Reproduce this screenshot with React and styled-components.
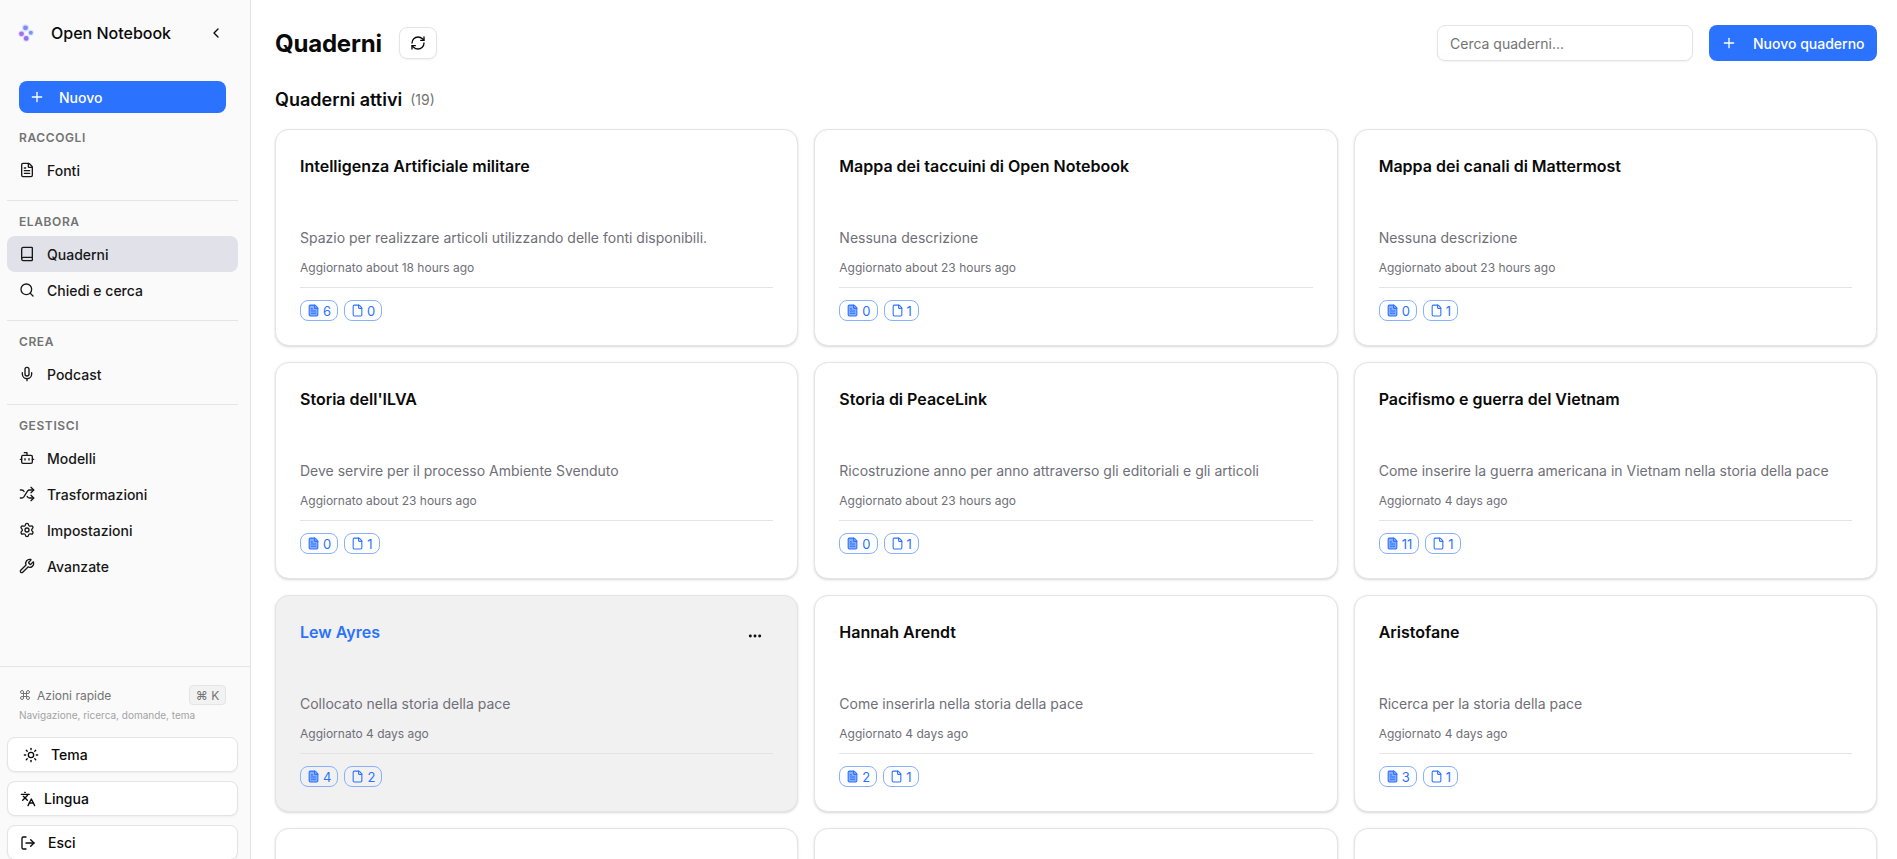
import React from 'react'
import styled, { createGlobalStyle } from 'styled-components'
import {
  Bot, Book, ChevronLeft, Command, File, FileText, Languages, LogOut, MoreHorizontal,
  Mic, Plus, RefreshCw, Search, Settings, Shuffle, Sun, Wrench,
} from 'lucide-react'

const GlobalStyle = createGlobalStyle`
  * { box-sizing: border-box; }
  html, body { margin: 0; height: 100%; overflow: hidden; background: #fff; }
  body { font-family: Inter, "Liberation Sans", sans-serif; color: #0a0a0a; }
`

const sections = [
  { label: 'RACCOGLI', items: [{ name: 'Fonti', Icon: FileText }] },
  {
    label: 'ELABORA',
    items: [
      { name: 'Quaderni', Icon: Book, active: true },
      { name: 'Chiedi e cerca', Icon: Search },
    ],
  },
  { label: 'CREA', items: [{ name: 'Podcast', Icon: Mic }] },
  {
    label: 'GESTISCI',
    items: [
      { name: 'Modelli', Icon: Bot },
      { name: 'Trasformazioni', Icon: Shuffle },
      { name: 'Impostazioni', Icon: Settings },
      { name: 'Avanzate', Icon: Wrench },
    ],
  },
]

const notebooks = [
  { title: 'Intelligenza Artificiale militare', desc: 'Spazio per realizzare articoli utilizzando delle fonti disponibili.', updated: 'about 18 hours ago', sources: 6, notes: 0 },
  { title: 'Mappa dei taccuini di Open Notebook', desc: 'Nessuna descrizione', updated: 'about 23 hours ago', sources: 0, notes: 1 },
  { title: 'Mappa dei canali di Mattermost', desc: 'Nessuna descrizione', updated: 'about 23 hours ago', sources: 0, notes: 1 },
  { title: "Storia dell'ILVA", desc: 'Deve servire per il processo Ambiente Svenduto', updated: 'about 23 hours ago', sources: 0, notes: 1 },
  { title: 'Storia di PeaceLink', desc: 'Ricostruzione anno per anno attraverso gli editoriali e gli articoli', updated: 'about 23 hours ago', sources: 0, notes: 1 },
  { title: 'Pacifismo e guerra del Vietnam', desc: 'Come inserire la guerra americana in Vietnam nella storia della pace', updated: '4 days ago', sources: 11, notes: 1 },
  { title: 'Lew Ayres', desc: 'Collocato nella storia della pace', updated: '4 days ago', sources: 4, notes: 2, hovered: true },
  { title: 'Hannah Arendt', desc: 'Come inserirla nella storia della pace', updated: '4 days ago', sources: 2, notes: 1 },
  { title: 'Aristofane', desc: 'Ricerca per la storia della pace', updated: '4 days ago', sources: 3, notes: 1 },
]

function Logo() {
  return (
    <svg width="18" height="18" viewBox="0 0 18 18">
      <circle cx="7.5" cy="3.8" r="3.6" fill="#d5e2fd" />
      <circle cx="3.5" cy="9.8" r="3.4" fill="#e6dcfd" />
      <circle cx="12.8" cy="8.8" r="3" fill="#d9e4fd" />
      <circle cx="8.2" cy="14.4" r="3.4" fill="#e2dcfd" />
      <circle cx="7.5" cy="3.8" r="2.4" fill="#7f8af6" />
      <circle cx="3.5" cy="9.8" r="2.4" fill="#a26ef2" />
      <circle cx="12.8" cy="8.8" r="2" fill="#7f93f6" />
      <circle cx="8.2" cy="14.4" r="2.4" fill="#8d72f3" />
    </svg>
  )
}

function NotebookCard({ notebook }) {
  const { title, desc, updated, sources, notes, hovered } = notebook
  return (
    <Card $hovered={hovered}>
      <CardTop>
        <CardTitle $hovered={hovered}>{title}</CardTitle>
        {hovered && <MoreButton><MoreHorizontal size={16} strokeWidth={2.4} /></MoreButton>}
      </CardTop>
      <CardDesc>{desc}</CardDesc>
      <CardDate>Aggiornato {updated}</CardDate>
      <CardStats>
        <StatBadge>
          <FileText size={13} fill="#86adff" />
          {sources}
        </StatBadge>
        <StatBadge>
          <File size={13} />
          {notes}
        </StatBadge>
      </CardStats>
    </Card>
  )
}

export default function App() {
  return (
    <Page>
      <GlobalStyle />
      <Sidebar>
        <Brand>
          <BrandName>
            <Logo />
            <span>Open Notebook</span>
          </BrandName>
          <ChevronLeft size={16} />
        </Brand>
        <NewWrap>
          <NewButton>
            <Plus size={16} />
            Nuovo
          </NewButton>
        </NewWrap>
        <Nav>
          {sections.map((section) => (
            <Section key={section.label}>
              <SectionLabel>{section.label}</SectionLabel>
              {section.items.map(({ name, Icon, active }) => (
                <NavItem key={name} $active={active}>
                  <Icon size={16} />
                  {name}
                </NavItem>
              ))}
            </Section>
          ))}
        </Nav>
        <SideFooter>
          <QuickRow>
            <QuickLabel><Command size={12} />Azioni rapide</QuickLabel>
            <Kbd>⌘ K</Kbd>
          </QuickRow>
          <QuickHint>Navigazione, ricerca, domande, tema</QuickHint>
          <FooterButtons>
            <FooterButton $gap={12} $pad={15}><Sun size={16} />Tema</FooterButton>
            <FooterButton $gap={8} $pad={12}><Languages size={16} />Lingua</FooterButton>
            <FooterButton $gap={12} $pad={12}><LogOut size={16} />Esci</FooterButton>
          </FooterButtons>
        </SideFooter>
      </Sidebar>
      <Main>
        <TopBar>
          <TitleGroup>
            <PageTitle>Quaderni</PageTitle>
            <IconButton><RefreshCw size={16} /></IconButton>
          </TitleGroup>
          <Actions>
            <SearchInput placeholder="Cerca quaderni..." readOnly />
            <PrimaryButton>
              <Plus size={16} />
              Nuovo quaderno
            </PrimaryButton>
          </Actions>
        </TopBar>
        <ListHeading>
          <ListTitle>Quaderni attivi</ListTitle>
          <ListCount>(19)</ListCount>
        </ListHeading>
        <CardGrid>
          {notebooks.map((notebook) => (
            <NotebookCard key={notebook.title} notebook={notebook} />
          ))}
          <Card />
          <Card />
          <Card />
        </CardGrid>
      </Main>
    </Page>
  )
}

const Page = styled.div`
  display: flex;
  height: 100vh;
  overflow: hidden;
`
const Sidebar = styled.aside`
  width: 251px;
  flex-shrink: 0;
  display: flex;
  flex-direction: column;
  background: #fafafa;
  border-right: 1px solid #e4e4e4;
`
const Brand = styled.div`
  height: 65px;
  flex-shrink: 0;
  display: flex;
  align-items: center;
  justify-content: space-between;
  padding: 0 26px 0 18px;
`
const BrandName = styled.div`
  display: flex;
  align-items: center;
  gap: 15px;
  font-size: 16px;
  font-weight: 500;
`
const NewWrap = styled.div`
  padding: 16px 24px 0 19px;
`
const NewButton = styled.div`
  height: 32px;
  display: flex;
  align-items: center;
  gap: 14px;
  padding: 0 10px;
  border-radius: 8px;
  background: #2b72ff;
  color: #fff;
  font-size: 14px;
  font-weight: 500;
`
const Nav = styled.nav`
  flex: 1;
  min-height: 0;
  display: flex;
  flex-direction: column;
`
const Section = styled.div`
  padding: 16px 0 12px;
  margin: 0 12px 0 7px;
  & + & {
    padding-top: 12px;
    border-top: 1px solid #e4e4e4;
  }
`
const SectionLabel = styled.div`
  height: 16px;
  margin-bottom: 7px;
  padding-left: 12px;
  display: flex;
  align-items: center;
  font-size: 12px;
  font-weight: 600;
  letter-spacing: 0.6px;
  color: #737373;
`
const NavItem = styled.div`
  height: 36px;
  display: flex;
  align-items: center;
  gap: 12px;
  padding-left: 12px;
  border-radius: 8px;
  font-size: 14px;
  font-weight: 500;
  color: #171717;
  background: ${(p) => (p.$active ? '#e1e2e9' : 'transparent')};
`
const SideFooter = styled.div`
  height: 193px;
  flex-shrink: 0;
  border-top: 1px solid #e4e4e4;
  padding: 18px 12px 0 7px;
`
const QuickRow = styled.div`
  display: flex;
  align-items: center;
  justify-content: space-between;
  padding: 0 12px;
`
const QuickLabel = styled.div`
  display: flex;
  align-items: center;
  gap: 6px;
  font-size: 12px;
  color: #737373;
`
const Kbd = styled.span`
  width: 37px;
  height: 20px;
  display: flex;
  align-items: center;
  justify-content: center;
  border: 1px solid #e4e4e4;
  border-radius: 4px;
  background: #f2f2f2;
  font-size: 12px;
  color: #737373;
`
const QuickHint = styled.div`
  margin: 3px 0 0 12px;
  font-size: 10px;
  line-height: 15px;
  color: #a3a3a3;
`
const FooterButtons = styled.div`
  margin-top: 14px;
  display: flex;
  flex-direction: column;
  gap: 9px;
`
const FooterButton = styled.div`
  height: 35px;
  flex-shrink: 0;
  display: flex;
  align-items: center;
  gap: ${(p) => p.$gap}px;
  padding-left: ${(p) => p.$pad}px;
  border: 1px solid #e4e4e4;
  border-radius: 8px;
  background: #fff;
  box-shadow: 0 1px 2px rgba(0, 0, 0, 0.05);
  font-size: 14px;
  font-weight: 500;
`
const Main = styled.main`
  flex: 1;
  min-width: 0;
  padding: 25px 20px 0 24px;
`
const TopBar = styled.div`
  height: 36px;
  display: flex;
  align-items: center;
  justify-content: space-between;
`
const TitleGroup = styled.div`
  display: flex;
  align-items: center;
  gap: 17px;
`
const PageTitle = styled.h1`
  margin: 0;
  font-size: 24px;
  font-weight: 700;
  letter-spacing: -0.2px;
`
const IconButton = styled.div`
  width: 38px;
  height: 32px;
  display: flex;
  align-items: center;
  justify-content: center;
  border: 1px solid #e4e4e4;
  border-radius: 8px;
  background: #fff;
  box-shadow: 0 1px 2px rgba(0, 0, 0, 0.05);
`
const Actions = styled.div`
  display: flex;
  align-items: center;
  gap: 16px;
`
const SearchInput = styled.input`
  width: 256px;
  height: 36px;
  padding: 0 12px;
  border: 1px solid #e4e4e4;
  border-radius: 8px;
  outline: none;
  font-family: inherit;
  font-size: 14px;
  box-shadow: 0 1px 2px rgba(0, 0, 0, 0.05);
  &::placeholder { color: #737373; }
`
const PrimaryButton = styled.div`
  width: 168px;
  height: 36px;
  display: flex;
  align-items: center;
  gap: 16px;
  padding-left: 12px;
  border-radius: 8px;
  background: #2b72ff;
  color: #fff;
  font-size: 14px;
  font-weight: 500;
`
const ListHeading = styled.div`
  margin-top: 26px;
  height: 24px;
  display: flex;
  align-items: center;
  gap: 8px;
`
const ListTitle = styled.h2`
  margin: 0;
  font-size: 18px;
  font-weight: 600;
`
const ListCount = styled.span`
  font-size: 14px;
  color: #737373;
`
const CardGrid = styled.div`
  margin-top: 18px;
  display: grid;
  grid-template-columns: repeat(3, 1fr);
  gap: 16px;
`
const Card = styled.article`
  height: 217px;
  padding: 24px;
  display: flex;
  flex-direction: column;
  border: 1px solid #e4e4e4;
  border-radius: 14px;
  background: ${(p) => (p.$hovered ? '#f1f1f1' : '#fff')};
  box-shadow: 0 1px 3px rgba(0, 0, 0, 0.1), 0 1px 2px rgba(0, 0, 0, 0.06);
`
const CardTop = styled.div`
  height: 48px;
  display: flex;
  justify-content: space-between;
`
const CardTitle = styled.h3`
  margin: 0;
  font-size: 16px;
  line-height: 24px;
  font-weight: 600;
  color: ${(p) => (p.$hovered ? '#2b72ff' : '#0a0a0a')};
`
const MoreButton = styled.div`
  width: 36px;
  height: 32px;
  display: flex;
  align-items: center;
  justify-content: center;
`
const CardDesc = styled.p`
  margin: 26px 0 0;
  font-size: 14px;
  line-height: 20px;
  color: #6f6f78;
`
const CardDate = styled.div`
  margin-top: 12px;
  font-size: 12px;
  line-height: 16px;
  color: #6f6f78;
`
const CardStats = styled.div`
  margin-top: 11px;
  padding-top: 12px;
  border-top: 1px solid #e4e4e4;
  display: flex;
  gap: 6px;
`
const StatBadge = styled.span`
  height: 21px;
  padding: 0 6px;
  display: flex;
  align-items: center;
  gap: 3px;
  border: 1px solid #88b0ff;
  border-radius: 8px;
  color: #2b72ff;
  font-size: 13px;
  font-weight: 400;
`
